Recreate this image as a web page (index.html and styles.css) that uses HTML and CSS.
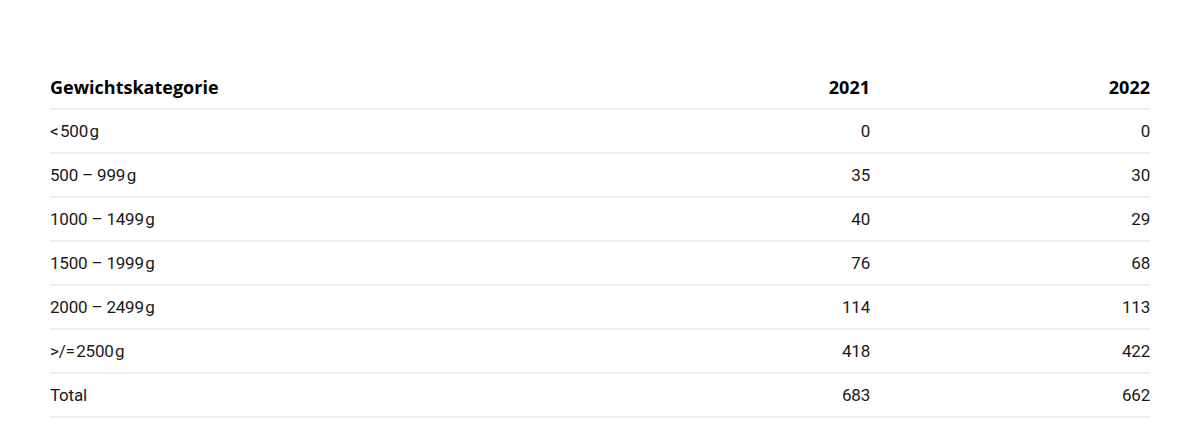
FILE: index.html
```html
<!DOCTYPE html>
<html lang="de">
<head>
<meta charset="utf-8">
<link rel="stylesheet" href="styles.css">
</head>
<body>
<div class="wrap">
<table class="data">
  <thead>
    <tr><th class="cat">Gewichtskategorie</th><th class="num">2021</th><th class="num">2022</th></tr>
  </thead>
  <tbody>
    <tr><td>&lt;&#8202;500&#8202;g</td><td class="num">0</td><td class="num">0</td></tr>
    <tr><td>500 – 999&#8202;g</td><td class="num">35</td><td class="num">30</td></tr>
    <tr><td>1000 – 1499&#8202;g</td><td class="num">40</td><td class="num">29</td></tr>
    <tr><td>1500 – 1999&#8202;g</td><td class="num">76</td><td class="num">68</td></tr>
    <tr><td>2000 – 2499&#8202;g</td><td class="num">114</td><td class="num">113</td></tr>
    <tr><td>&gt;/=&#8202;2500&#8202;g</td><td class="num">418</td><td class="num">422</td></tr>
    <tr><td>Total</td><td class="num">683</td><td class="num">662</td></tr>
  </tbody>
</table>
</div>
</body>
</html>
```
FILE: styles.css
```css
html, body { margin: 0; padding: 0; background: #fff; }
body { font-family: Roboto, "Liberation Sans", sans-serif; color: #111; }
.wrap { padding: 66px 50px 0 50px; }
.data { width: 1100px; border-collapse: collapse; table-layout: fixed; }
.data th, .data td {
  height: 42px;
  padding: 0;
  border-bottom: 2px solid #f0f0f0;
  vertical-align: middle;
  text-align: left;
}
.data th { font-family: "Open Sans", sans-serif; font-weight: 700; font-size: 18px; color: #000; }
.data td { font-size: 17px; font-weight: 400; letter-spacing: -0.2px; color: #1a1a1a; }
.data .cat { width: 540px; }
.data .num { width: 280px; text-align: right; }
```
